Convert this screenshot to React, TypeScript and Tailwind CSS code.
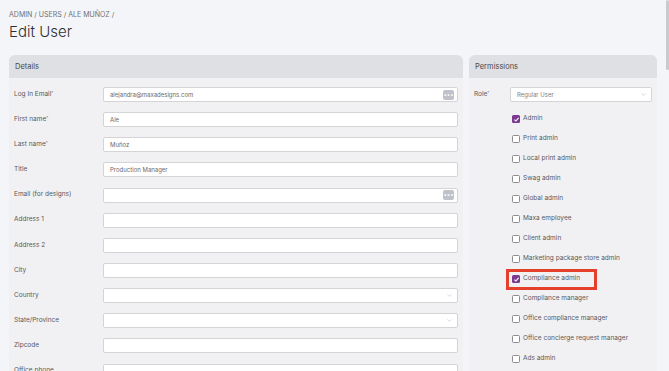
import { ChevronDown } from 'lucide-react';

const font = { fontFamily: 'Inter, "Open Sans", sans-serif' };

const detailRows: { label: string; value?: string; kind?: 'dots' | 'select'; required?: boolean }[] = [
  { label: 'Log In Email', value: 'alejandra@maxadesigns.com', kind: 'dots', required: true },
  { label: 'First name', value: 'Ale', required: true },
  { label: 'Last name', value: 'Muñoz', required: true },
  { label: 'Title', value: 'Production Manager' },
  { label: 'Email (for designs)', kind: 'dots' },
  { label: 'Address 1' },
  { label: 'Address 2' },
  { label: 'City' },
  { label: 'Country', kind: 'select' },
  { label: 'State/Province', kind: 'select' },
  { label: 'Zipcode' },
  { label: 'Office phone' },
];

const permissions = [
  { name: 'Admin', checked: true },
  { name: 'Print admin' },
  { name: 'Local print admin' },
  { name: 'Swag admin' },
  { name: 'Global admin' },
  { name: 'Maxa employee' },
  { name: 'Client admin' },
  { name: 'Marketing package store admin' },
  { name: 'Compliance admin', checked: true, highlight: true },
  { name: 'Compliance manager' },
  { name: 'Office compliance manager' },
  { name: 'Office concierge request manager' },
  { name: 'Ads admin' },
];

function Checkbox({ checked }: { checked?: boolean }) {
  if (checked) {
    return (
      <span className="w-[8px] h-[8px] rounded-[1.5px] bg-[#7d3a93] flex items-center justify-center shrink-0">
        <svg viewBox="0 0 10 10" className="w-[7px] h-[7px]">
          <path d="M2 5.2 L4.1 7.2 L8 2.8" stroke="white" strokeWidth="1.6" fill="none" />
        </svg>
      </span>
    );
  }
  return <span className="w-[8px] h-[8px] rounded-[1.5px] border border-[#8d8d8f] bg-white shrink-0" />;
}

export default function App() {
  return (
    <div className="relative h-screen overflow-hidden bg-[#f4f5f8] text-[#333]" style={font}>
      {/* fake scrollbar */}
      <div className="absolute right-0 top-0 w-[3px] h-[70px] bg-[#c9cacd] rounded-full" />

      <div className="pl-[9px] pr-[12px] pt-[10px]">
        <div className="text-[7px] leading-[10px] text-[#707075] uppercase">Admin / Users / Ale Muñoz /</div>
        <h1 className="text-[15px] leading-[20px] mt-[2px] font-light text-[#2f2f33]">Edit User</h1>

        <div className="flex gap-[6px] mt-[13px] items-start">
          {/* Details */}
          <div className="w-[454px] rounded-t-[6px] overflow-hidden bg-[#f1f1f3]">
            <div className="h-[23px] bg-[#dfe0e3] flex items-center px-[6px] text-[7.5px] text-[#48484c]">Details</div>
            <div className="pt-[4px] pl-[5px] pr-[5px] pb-[20px]">
              {detailRows.map((r) => (
                <div key={r.label} className="h-[25.15px] flex items-center">
                  <div className="w-[89px] text-[6.5px] text-[#58585c]">
                    {r.label}
                    {r.required && <sup className="text-[4px]">*</sup>}
                  </div>
                  <div className="flex-1 h-[15px] bg-white border border-[#d4d4d6] rounded-[2px] flex items-center px-[6px] justify-between">
                    <span className="text-[6px] text-[#6a6a6e]">{r.value ?? ''}</span>
                    {r.kind === 'dots' && (
                      <span className="w-[11px] h-[10px] rounded-[2px] bg-[#bfc2c9] flex items-center justify-center text-white text-[6px] leading-none -mr-[3px]">
                        •••
                      </span>
                    )}
                    {r.kind === 'select' && <ChevronDown className="w-[7px] h-[7px] text-[#aaa] -mr-[2px]" strokeWidth={1.5} />}
                  </div>
                </div>
              ))}
            </div>
          </div>

          {/* Permissions */}
          <div className="w-[188px] rounded-t-[6px] overflow-hidden bg-[#f1f1f3]">
            <div className="h-[23px] bg-[#dfe0e3] flex items-center px-[6px] text-[7.5px] text-[#48484c]">Permissions</div>
            <div className="pt-[4px] pl-[5px] pr-[5px] pb-[20px]">
              <div className="h-[25px] flex items-center">
                <div className="w-[36px] text-[6.5px] text-[#58585c]">
                  Role<sup className="text-[4px]">*</sup>
                </div>
                <div className="flex-1 h-[15px] bg-white border border-[#d4d4d6] rounded-[2px] flex items-center justify-between px-[6px]">
                  <span className="text-[6px] text-[#808085]">Regular User</span>
                  <ChevronDown className="w-[7px] h-[7px] text-[#aaa] -mr-[2px]" strokeWidth={1.5} />
                </div>
              </div>
              <div className="mt-[2px]">
                {permissions.map((p) => (
                  <div key={p.name} className="relative h-[20px] flex items-center gap-[3px] pl-[38px]">
                    {p.highlight && (
                      <div className="absolute left-[32px] top-[0px] w-[91px] h-[21px] border-[3px] border-[#e4402c]" />
                    )}
                    <Checkbox checked={p.checked} />
                    <span className="text-[6.5px] text-[#58585c]">{p.name}</span>
                  </div>
                ))}
              </div>
            </div>
          </div>
        </div>
      </div>
    </div>
  );
}
